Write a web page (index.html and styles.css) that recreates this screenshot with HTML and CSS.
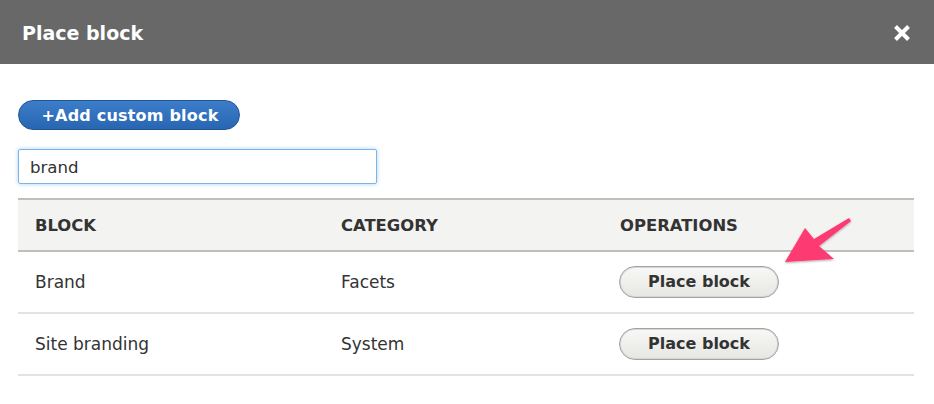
FILE: index.html
```html
<!DOCTYPE html>
<html>
<head>
<meta charset="utf-8">
<link rel="stylesheet" href="styles.css">
</head>
<body>
<div class="dialog">
  <div class="titlebar">
    <span class="title">Place block</span>
    <svg class="close" width="18" height="18" viewBox="0 0 18 18"><path d="M2.5 2.5 L15.5 15.5 M15.5 2.5 L2.5 15.5" stroke="#fff" stroke-width="4" stroke-linecap="butt"/></svg>
  </div>
  <div class="content">
    <button class="add-btn">+Add custom block</button>
    <div class="search"><span>brand</span></div>
    <table class="blocks">
      <thead>
        <tr><th class="c1">Block</th><th class="c2">Category</th><th>Operations</th></tr>
      </thead>
      <tbody>
        <tr><td>Brand</td><td>Facets</td><td><button class="place">Place block</button></td></tr>
        <tr><td>Site branding</td><td>System</td><td><button class="place">Place block</button></td></tr>
      </tbody>
    </table>
  </div>
  <svg class="arrow" width="100" height="70" viewBox="0 0 100 70">
    <defs><filter id="sh" x="-20%" y="-20%" width="140%" height="140%"><feDropShadow dx="0" dy="1" stdDeviation="1.2" flood-color="#000" flood-opacity="0.35"/></filter></defs>
    <path filter="url(#sh)" fill="#fd3a72" d="M71 6 L73 9 L41 34 L56 47 L7 50 L27 16 L36 27 Z"/>
  </svg>
</div>
</body>
</html>
```
FILE: styles.css
```css
* { box-sizing: border-box; }
body { margin: 0; background: #fff; font-family: "DejaVu Sans", Verdana, sans-serif; }
.dialog { position: relative; width: 934px; height: 404px; }
.titlebar { height: 64px; background: #686868; display: flex; align-items: center; justify-content: space-between; padding: 2px 23px 0 22px; }
.title { color: #fff; font-weight: bold; font-size: 19px; }
.close { display: block; }
.content { padding: 36px 20px 0 18px; }
.add-btn { display: block; height: 30px; width: 222px; border-radius: 15px; border: 1px solid #1f5698; background: linear-gradient(#3c7dca, #2866b0); color: #fff; font-family: inherit; font-weight: bold; font-size: 16px; padding: 0 0 0 2px; letter-spacing: 0.2px; text-align: center; }
.search { margin-top: 19px; width: 359px; height: 35px; border: 1px solid #7db4e8; box-shadow: 0 0 4px #a8d0f5; border-radius: 2px; padding: 1px 11px 0; display: flex; align-items: center; font-size: 16.6px; color: #333; }
.blocks { margin-top: 14px; width: 896px; border-collapse: collapse; font-size: 17px; color: #333; }
.blocks th { text-align: left; text-transform: uppercase; font-weight: bold; font-size: 16.4px; color: #333; background: #f3f3f2; border-top: 2px solid #bebebe; border-bottom: 2px solid #bebebe; height: 52px; padding: 0 0 0 17px; }
.blocks th.c1 { width: 306px; }
.blocks th.c2 { width: 279px; }
.blocks td { height: 62px; border-bottom: 2px solid #e3e3e1; padding: 0 0 1px 17px; }
.blocks td:nth-child(3) { padding-left: 16px; }
.place { display: block; width: 160px; height: 32px; border-radius: 16px; border: 1px solid #a3a3a3; box-shadow: inset 0 0 0 1px #d6d6d4; background: linear-gradient(#f8f8f6, #e6e6e3); font-family: inherit; font-weight: bold; font-size: 16px; color: #333; padding: 0; }
.arrow { position: absolute; left: 778px; top: 212px; }
```
